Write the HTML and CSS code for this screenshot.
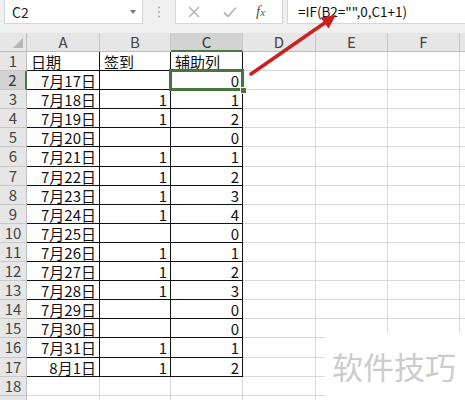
FILE: index.html
```html
<!DOCTYPE html>
<html>
<head>
<meta charset="utf-8">
<link rel="stylesheet" href="styles.css">
</head>
<body>
<div class="app">
  <div class="toolbar">
    <div class="namebox"><span class="ref">C2</span><span class="dd"></span></div>
    <div class="sep">
      <svg width="4" height="12" viewBox="0 0 4 12"><circle cx="2" cy="1.5" r="1" fill="#b0b0b0"/><circle cx="2" cy="6" r="1" fill="#b0b0b0"/><circle cx="2" cy="10.5" r="1" fill="#b0b0b0"/></svg>
    </div>
    <div class="fbtns">
      <svg class="ico" width="12" height="12" viewBox="0 0 12 12"><path d="M1 1 L11 11 M11 1 L1 11" stroke="#b8b8b8" stroke-width="1.6" fill="none"/></svg>
      <svg class="ico" width="14" height="12" viewBox="0 0 14 12"><path d="M1 6.5 L5 10.5 L13 1.5" stroke="#b8b8b8" stroke-width="1.8" fill="none"/></svg>
      <span class="fx">f<span class="x">x</span></span>
    </div>
    <div class="finput">=IF(B2="",0,C1+1)</div>
  </div>
  <div class="sheet">
    <div class="corner"><span class="tri"></span></div>
    <div class="ch">A</div><div class="ch">B</div><div class="ch hsel">C</div><div class="ch">D</div><div class="ch">E</div><div class="ch">F</div><div class="ch"></div>

    <div class="rh">1</div><div class="c t">日期</div><div class="c t">签到</div><div class="c t">辅助列</div><div class="c"></div><div class="c"></div><div class="c"></div><div class="c"></div>
    <div class="rh rsel">2</div><div class="c t n">7月17日</div><div class="c t n"></div><div class="c t n sel">0</div><div class="c"></div><div class="c"></div><div class="c"></div><div class="c"></div>
    <div class="rh">3</div><div class="c t n">7月18日</div><div class="c t n">1</div><div class="c t n">1</div><div class="c"></div><div class="c"></div><div class="c"></div><div class="c"></div>
    <div class="rh">4</div><div class="c t n">7月19日</div><div class="c t n">1</div><div class="c t n">2</div><div class="c"></div><div class="c"></div><div class="c"></div><div class="c"></div>
    <div class="rh">5</div><div class="c t n">7月20日</div><div class="c t n"></div><div class="c t n">0</div><div class="c"></div><div class="c"></div><div class="c"></div><div class="c"></div>
    <div class="rh">6</div><div class="c t n">7月21日</div><div class="c t n">1</div><div class="c t n">1</div><div class="c"></div><div class="c"></div><div class="c"></div><div class="c"></div>
    <div class="rh">7</div><div class="c t n">7月22日</div><div class="c t n">1</div><div class="c t n">2</div><div class="c"></div><div class="c"></div><div class="c"></div><div class="c"></div>
    <div class="rh">8</div><div class="c t n">7月23日</div><div class="c t n">1</div><div class="c t n">3</div><div class="c"></div><div class="c"></div><div class="c"></div><div class="c"></div>
    <div class="rh">9</div><div class="c t n">7月24日</div><div class="c t n">1</div><div class="c t n">4</div><div class="c"></div><div class="c"></div><div class="c"></div><div class="c"></div>
    <div class="rh">10</div><div class="c t n">7月25日</div><div class="c t n"></div><div class="c t n">0</div><div class="c"></div><div class="c"></div><div class="c"></div><div class="c"></div>
    <div class="rh">11</div><div class="c t n">7月26日</div><div class="c t n">1</div><div class="c t n">1</div><div class="c"></div><div class="c"></div><div class="c"></div><div class="c"></div>
    <div class="rh">12</div><div class="c t n">7月27日</div><div class="c t n">1</div><div class="c t n">2</div><div class="c"></div><div class="c"></div><div class="c"></div><div class="c"></div>
    <div class="rh">13</div><div class="c t n">7月28日</div><div class="c t n">1</div><div class="c t n">3</div><div class="c"></div><div class="c"></div><div class="c"></div><div class="c"></div>
    <div class="rh">14</div><div class="c t n">7月29日</div><div class="c t n"></div><div class="c t n">0</div><div class="c"></div><div class="c"></div><div class="c"></div><div class="c"></div>
    <div class="rh">15</div><div class="c t n">7月30日</div><div class="c t n"></div><div class="c t n">0</div><div class="c"></div><div class="c"></div><div class="c"></div><div class="c"></div>
    <div class="rh">16</div><div class="c t n">7月31日</div><div class="c t n">1</div><div class="c t n">1</div><div class="c"></div><div class="c"></div><div class="c"></div><div class="c"></div>
    <div class="rh">17</div><div class="c t n">8月1日</div><div class="c t n">1</div><div class="c t n">2</div><div class="c"></div><div class="c"></div><div class="c"></div><div class="c"></div>
    <div class="rh">18</div><div class="c"></div><div class="c"></div><div class="c"></div><div class="c"></div><div class="c"></div><div class="c"></div><div class="c"></div>
    <div class="rh"></div><div class="c"></div><div class="c"></div><div class="c"></div><div class="c"></div><div class="c"></div><div class="c"></div><div class="c"></div>
  </div>
  <svg class="arrow" width="465" height="400" viewBox="0 0 465 400">
    <line x1="251" y1="74" x2="326" y2="22" stroke="#cc2020" stroke-width="3.6" stroke-linecap="round"/>
    <polygon points="336,15 328.5,28.5 320.5,17.5" fill="#cc2020"/>
  </svg>
  <div class="wm">软件技巧</div>
</div>
</body>
</html>
```

FILE: styles.css
```css
html, body {
  margin: 0;
  padding: 0;
  background: #ffffff;
}
.app {
  position: relative;
  width: 465px;
  height: 400px;
  overflow: hidden;
  font-family: "Noto Sans CJK SC", "Noto Sans", sans-serif;
}
.toolbar {
  height: 33px;
  background: #f0f0f0;
  display: flex;
  align-items: flex-start;
}
.namebox {
  margin-left: 4px;
  width: 139px;
  height: 24px;
  box-sizing: border-box;
  background: #fff;
  border: 1px solid #d6d6d6;
  border-top: none;
  display: flex;
  align-items: center;
  justify-content: space-between;
  padding: 0 6px 0 7px;
}
.ref {
  font-size: 14px;
  color: #222;
  line-height: 1;
}
.dd {
  width: 0;
  height: 0;
  border-left: 3.5px solid transparent;
  border-right: 3.5px solid transparent;
  border-top: 4px solid #777;
}
.sep {
  width: 32px;
  height: 24px;
  display: flex;
  align-items: center;
  justify-content: center;
}
.fbtns {
  width: 108px;
  height: 24px;
  box-sizing: border-box;
  background: #fff;
  border: 1px solid #d6d6d6;
  border-top: none;
  display: flex;
  align-items: center;
  padding-left: 12px;
}
.ico {
  display: block;
}
.fbtns .ico:first-child {
  margin-right: 23px;
}
.fbtns .ico:nth-child(2) {
  margin-right: 19px;
}
.fx {
  font-family: "Liberation Serif", serif;
  font-style: italic;
  font-size: 15px;
  color: #555;
  line-height: 1;
}
.fx .x {
  font-size: 11px;
}
.finput {
  margin-left: 4px;
  flex: 1;
  height: 24px;
  box-sizing: border-box;
  background: #fff;
  border: 1px solid #d6d6d6;
  border-top: none;
  border-right: none;
  padding-left: 10px;
  font-size: 13.5px;
  line-height: 23px;
  color: #111;
  white-space: nowrap;
}
.sheet {
  display: grid;
  grid-template-columns: 27px 73px 71px 72px 73px 72px 72px 40px;
  grid-template-rows: 19px;
  grid-auto-rows: 19.1px;
}
.sheet > div {
  box-sizing: border-box;
  border-right: 1px solid #d9d9d9;
  border-bottom: 1px solid #d9d9d9;
  font-size: 15px;
  line-height: 18px;
  white-space: nowrap;
}
.corner {
  background: #e6e6e6;
  position: relative;
  border-right-color: #bdbdbd !important;
  border-bottom-color: #bdbdbd !important;
}
.tri {
  position: absolute;
  right: 3px;
  bottom: 3px;
  width: 0;
  height: 0;
  border-left: 10px solid transparent;
  border-bottom: 10px solid #b5b5b5;
}
.ch {
  background: #e6e6e6;
  color: #444;
  text-align: center;
  border-right-color: #c8c8c8 !important;
  border-bottom-color: #bdbdbd !important;
}
.ch.hsel {
  background: #d3d3d3;
  border-bottom: 2px solid #4b7843 !important;
  color: #333;
}
.rh {
  background: #e6e6e6;
  color: #444;
  text-align: center;
  border-right-color: #bdbdbd !important;
  border-bottom-color: #c8c8c8 !important;
}
.rh.rsel {
  background: #d3d3d3;
  border-right: 2px solid #4b7843 !important;
  color: #333;
}
.c {
  color: #111;
  padding: 1px 3px 0 4px;
}
.c.t {
  border-right-color: #111;
  border-bottom-color: #111;
}
.c.n {
  text-align: right;
}
.sel {
  position: relative;
  z-index: 2;
}
.sel::before {
  content: "";
  position: absolute;
  left: -2px;
  top: -2px;
  right: -2px;
  bottom: -2px;
  border: 3px solid #47743f;
}
.sel::after {
  content: "";
  position: absolute;
  right: -5px;
  bottom: -5px;
  width: 5px;
  height: 5px;
  background: #47743f;
  border: 1px solid #fff;
}
.arrow {
  position: absolute;
  left: 0;
  top: 0;
  pointer-events: none;
  z-index: 5;
}
.wm {
  position: absolute;
  left: 325px;
  top: 333px;
  right: 0;
  bottom: 0;
  background: #fff;
  color: #cccccc;
  font-size: 31px;
  line-height: 31px;
  padding: 17px 0 0 7px;
  white-space: nowrap;
  z-index: 4;
}
```
